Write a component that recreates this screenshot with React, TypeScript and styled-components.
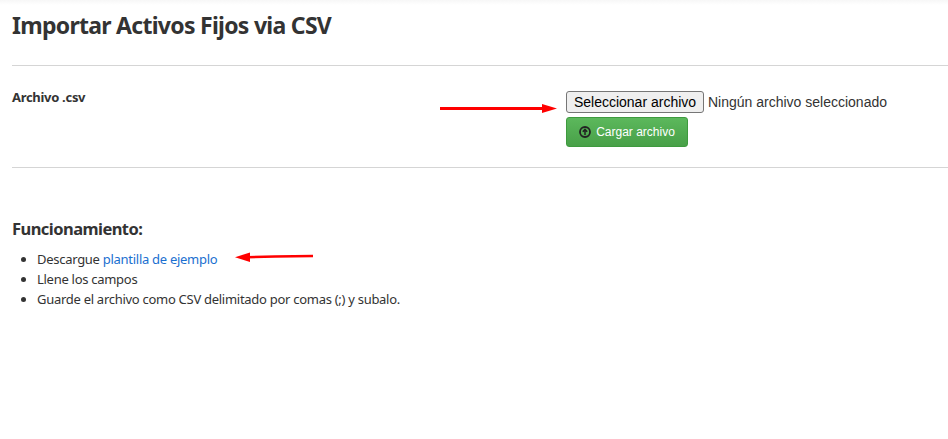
import React from "react";
import styled, { createGlobalStyle } from "styled-components";

const GlobalStyle = createGlobalStyle`
  html, body {
    margin: 0;
    padding: 0;
    background: #fff;
  }
  body {
    font-family: "Noto Sans", sans-serif;
    color: #333;
  }
`;

const Page = styled.div`
  position: relative;
  width: 948px;
  height: 439px;
  overflow: hidden;
  padding: 0 0 0 12px;
  box-sizing: border-box;
  background: linear-gradient(to bottom, #f7f7f7 0, #fff 5px);
`;

const Title = styled.h1`
  margin: 0;
  padding-top: 10px;
  height: 65px;
  box-sizing: border-box;
  font-size: 23px;
  line-height: 30px;
  font-weight: 700;
  letter-spacing: -0.72px;
  color: #333;
`;

const Rule = styled.hr`
  margin: 0;
  border: 0;
  border-top: 1px solid #d5d5d5;
`;

const FormRow = styled.div`
  display: grid;
  grid-template-columns: 554px 1fr;
  height: 101px;
  box-sizing: border-box;
  padding-top: 25px;
`;

const FieldLabel = styled.label`
  font-size: 13px;
  line-height: 12px;
  font-weight: 700;
  letter-spacing: -0.3px;
  color: #333;
`;

const FileColumn = styled.div`
  display: flex;
  flex-direction: column;
  align-items: flex-start;
  gap: 4px;
`;

const FilePicker = styled.div`
  display: flex;
  align-items: center;
  gap: 4px;
  font-family: "Liberation Sans", Arial, sans-serif;
  font-size: 14px;
  color: #333;
`;

const PickerButton = styled.button`
  width: 138px;
  height: 22px;
  padding: 0;
  border: 1px solid #767676;
  border-radius: 3px;
  background: #efefef;
  color: #000;
  font: inherit;
`;

const UploadButton = styled.button`
  display: flex;
  align-items: center;
  justify-content: center;
  gap: 5px;
  width: 122px;
  height: 30px;
  padding: 0;
  border: 1px solid #3e9a3e;
  border-radius: 3px;
  background: linear-gradient(to bottom, #5cb85c 0, #48a048 100%);
  color: #fff;
  font-family: "Liberation Sans", Arial, sans-serif;
  font-size: 12px;
  font-weight: 400;
`;

const HowTo = styled.section`
  padding-top: 50px;
`;

const HowToTitle = styled.h3`
  margin: 0 0 9px;
  font-size: 16.5px;
  line-height: 22px;
  font-weight: 700;
  letter-spacing: -0.55px;
  color: #333;
`;

const Steps = styled.ul`
  margin: 0;
  padding: 0 0 0 25px;
  font-size: 13px;
  line-height: 20px;
  letter-spacing: -0.28px;
  color: #333;
`;

const SampleLink = styled.a`
  color: #1a6fd0;
  text-decoration: none;
`;

const Arrow = styled.svg<{ $left: number; $top: number }>`
  position: absolute;
  left: ${(p) => p.$left}px;
  top: ${(p) => p.$top}px;
`;

const UploadIcon = () => (
  <svg width="12" height="12" viewBox="0 0 12 12">
    <circle cx="6" cy="6" r="5" fill="none" stroke="#222" strokeWidth="1.8" />
    <path d="M6 9V4M3.8 5.8 6 3.4l2.2 2.4" fill="none" stroke="#222" strokeWidth="1.5" />
  </svg>
);

const App = () => (
  <Page>
    <GlobalStyle />
    <Title>Importar Activos Fijos via CSV</Title>
    <Rule />
    <FormRow>
      <FieldLabel>Archivo .csv</FieldLabel>
      <FileColumn>
        <FilePicker>
          <PickerButton type="button">Seleccionar archivo</PickerButton>
          <span>Ningún archivo seleccionado</span>
        </FilePicker>
        <UploadButton type="button">
          <UploadIcon />
          Cargar archivo
        </UploadButton>
      </FileColumn>
    </FormRow>
    <Rule />
    <HowTo>
      <HowToTitle>Funcionamiento:</HowToTitle>
      <Steps>
        <li>
          Descargue <SampleLink href="#">plantilla de ejemplo</SampleLink>
        </li>
        <li>Llene los campos</li>
        <li>Guarde el archivo como CSV delimitado por comas (;) y subalo.</li>
      </Steps>
    </HowTo>
    <Arrow $left={440} $top={102} width="118" height="12" viewBox="0 0 118 12">
      <path d="M0 6.5h104" stroke="#f00" strokeWidth="3" />
      <path d="M102 2 117 6.5 102 11z" fill="#f00" />
    </Arrow>
    <Arrow $left={235} $top={250} width="80" height="12" viewBox="0 0 80 12">
      <path d="M12 7.2 40 6.5 78 6" fill="none" stroke="#f00" strokeWidth="2.6" />
      <path d="M15 2.5 0 7.2 15 12z" fill="#f00" />
    </Arrow>
  </Page>
);

export default App;
